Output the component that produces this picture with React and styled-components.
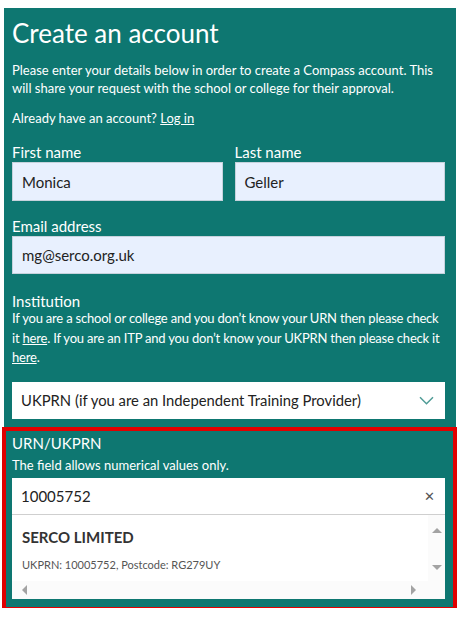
import React from "react";
import styled, { createGlobalStyle } from "styled-components";

const GlobalStyle = createGlobalStyle`
  body {
    margin: 0;
    background: #ffffff;
    font-family: Lato, "Open Sans", sans-serif;
  }
`;

const Panel = styled.div`
  margin: 8px 6px 0 4px;
  padding: 6px 11px 9px 8px;
  background: #0e7771;
  color: #ffffff;
`;

const Title = styled.h1`
  margin: 0 0 9px;
  font-size: 26px;
  font-weight: 400;
  line-height: 38px;
`;

const Text = styled.p`
  margin: ${(p) => p.top || 0}px 0 ${(p) => p.gap || 0}px;
  font-size: 13px;
  line-height: ${(p) => p.lh || 18}px;
  letter-spacing: ${(p) => p.ls || 0}px;
`;

const Link = styled.a`
  color: #ffffff;
  text-decoration: underline;
`;

const Row = styled.div`
  display: grid;
  grid-template-columns: 1fr 1fr;
  column-gap: 12px;
`;

const Field = styled.div`
  display: flex;
  flex-direction: column;
  margin-bottom: ${(p) => p.gap || 0}px;
`;

const Label = styled.label`
  font-size: 15px;
  line-height: 20px;
`;

const Input = styled.div`
  height: ${(p) => p.h || 38}px;
  box-sizing: border-box;
  border: 1px solid #c6d2dc;
  background: #e8f0fe;
  color: #222;
  font-size: 15px;
  display: flex;
  align-items: center;
  padding: 0 9px;
`;

const Select = styled.div`
  height: 37px;
  background: #ffffff;
  color: #222;
  font-size: 14.8px;
  display: flex;
  align-items: center;
  justify-content: space-between;
  padding: 0 11px 0 9px;
`;

const Section = styled.div`
  position: relative;
  margin-top: 8px;
  padding-top: 6px;

  &::after {
    content: "";
    position: absolute;
    left: -10px;
    right: -12px;
    top: 0;
    bottom: -12px;
    border: 4px solid #e10000;
    pointer-events: none;
  }
`;

const Search = styled.div`
  height: 37px;
  margin-top: 1px;
  box-sizing: border-box;
  background: #ffffff;
  border-bottom: 1px solid #cfcfcf;
  color: #222;
  font-size: 15px;
  display: flex;
  align-items: center;
  justify-content: space-between;
  padding: 0 10px 0 9px;
`;

const Clear = styled.span`
  font-size: 13px;
  color: #555;
`;

const List = styled.div`
  height: 84px;
  background: #ffffff;
  display: grid;
  grid-template-columns: 1fr 17px;
  grid-template-rows: 1fr 18px;
`;

const Option = styled.div`
  padding: 12px 0 0 10px;
  color: #333;
`;

const OptionTitle = styled.div`
  font-size: 15px;
  font-weight: 700;
  line-height: 20px;
`;

const OptionMeta = styled.div`
  margin-top: 11px;
  font-size: 11px;
  line-height: 13px;
  color: #555;
`;

const VBar = styled.div`
  background: #fbfbfb;
  display: flex;
  flex-direction: column;
  align-items: center;
  justify-content: space-between;
  padding: 13px 0 11px;
`;

const HBar = styled.div`
  background: #fbfbfb;
  display: flex;
  align-items: center;
  justify-content: space-between;
  padding: 0 12px 0 10px;
`;

const Corner = styled.div`
  background: #fbfbfb;
`;

const Arrow = styled.span`
  width: 0;
  height: 0;
  border: 5px solid transparent;
  ${(p) => p.dir === "up" && "border-bottom-color: #a3a3a3; border-top-width: 0;"}
  ${(p) => p.dir === "down" && "border-top-color: #a3a3a3; border-bottom-width: 0;"}
  ${(p) => p.dir === "left" && "border-right-color: #a3a3a3; border-left-width: 0;"}
  ${(p) => p.dir === "right" && "border-left-color: #a3a3a3; border-right-width: 0;"}
`;

const Chevron = () => (
  <svg width="15" height="9" viewBox="0 0 15 9">
    <path d="M1 1.2 L7.5 7.7 L14 1.2" fill="none" stroke="#4f9c96" strokeWidth="1.5" />
  </svg>
);

export default function App() {
  return (
    <>
      <GlobalStyle />
      <Panel>
        <Title>Create an account</Title>
        <Text gap={12}>
          Please enter your details below in order to create a Compass account. This
          will share your request with the school or college for their approval.
        </Text>
        <Text gap={15}>
          Already have an account? <Link href="#">Log in</Link>
        </Text>
        <Row>
          <Field gap={15}>
            <Label>First name</Label>
            <Input h={39}>Monica</Input>
          </Field>
          <Field gap={15}>
            <Label>Last name</Label>
            <Input h={39}>Geller</Input>
          </Field>
        </Row>
        <Field gap={17}>
          <Label>Email address</Label>
          <Input h={38}>mg@serco.org.uk</Input>
        </Field>
        <Field>
          <Label>Institution</Label>
          <Text lh={19.5} top={-2} gap={14} ls={-0.2}>
            If you are a school or college and you don’t know your URN then please check
            it <Link href="#">here</Link>. If you are an ITP and you don’t know your UKPRN
            then please check it <Link href="#">here</Link>.
          </Text>
          <Select>
            UKPRN (if you are an Independent Training Provider)
            <Chevron />
          </Select>
        </Field>
        <Section>
          <Label>URN/UKPRN</Label>
          <Text lh={24}>The field allows numerical values only.</Text>
          <Search>
            10005752
            <Clear>✕</Clear>
          </Search>
          <List>
            <Option>
              <OptionTitle>SERCO LIMITED</OptionTitle>
              <OptionMeta>UKPRN: 10005752, Postcode: RG279UY</OptionMeta>
            </Option>
            <VBar>
              <Arrow dir="up" />
              <Arrow dir="down" />
            </VBar>
            <HBar>
              <Arrow dir="left" />
              <Arrow dir="right" />
            </HBar>
            <Corner />
          </List>
        </Section>
      </Panel>
    </>
  );
}
